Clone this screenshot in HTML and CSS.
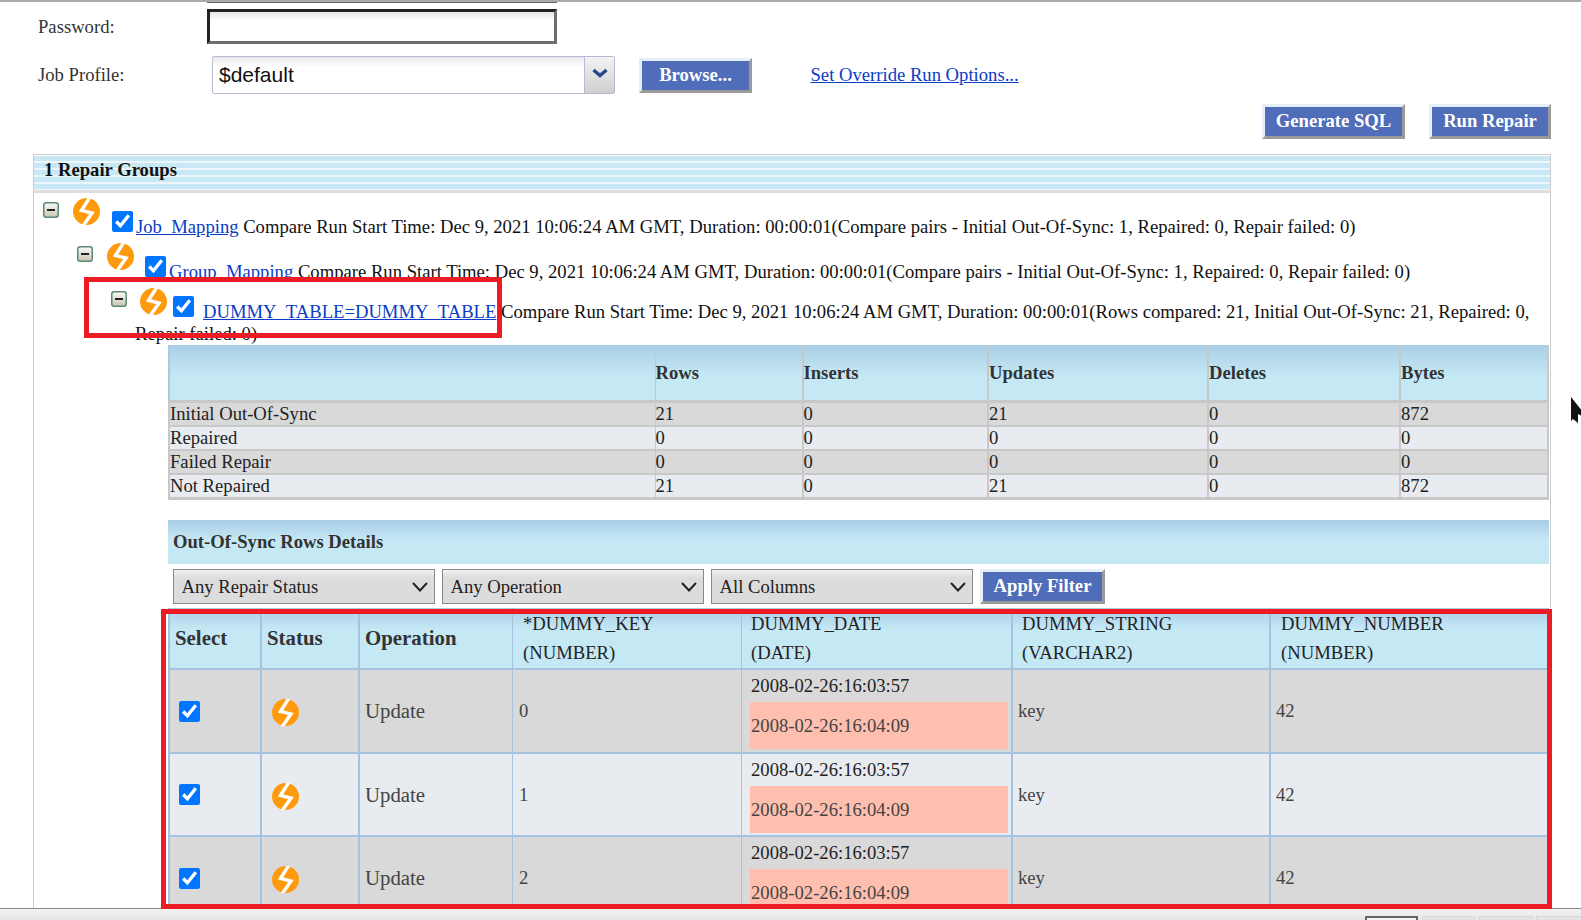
FILE: index.html
```html
<!DOCTYPE html>
<html lang="en">
<head>
<meta charset="utf-8">
<title>Repair Groups</title>
<link rel="stylesheet" href="styles.css">
</head>
<body>
<svg class="sprite" aria-hidden="true">
  <symbol id="status" viewBox="0 0 27 27">
    <circle cx="13.5" cy="13.5" r="13.5" fill="#ff9a0d"/>
    <path d="M17 -1 L8.5 12.5 L19 15 L10 28" fill="none" stroke="#fff" stroke-width="3.4"/>
  </symbol>
  <symbol id="minus" viewBox="0 0 16 16">
    <rect x=".75" y=".75" width="14.5" height="14.5" rx="2.5" fill="url(#minusfill)" stroke="#5d8a72" stroke-width="1.5"/>
    <rect x="4" y="7" width="8" height="2" fill="#222"/>
  </symbol>
  <linearGradient id="minusfill" x1="0" y1="0" x2="0" y2="1">
    <stop offset="0" stop-color="#fbfbf7"/><stop offset="1" stop-color="#c9c4b4"/>
  </linearGradient>
</svg>
<div class="page">
  <main class="content">
    <div class="prev-edge"></div>
    <div class="form-row password-row">
      <label class="form-label">Password:</label>
      <input class="password" type="password">
    </div>
    <div class="form-row profile-row">
      <label class="form-label">Job Profile:</label>
      <div class="combo">
        <span class="combo-value">$default</span>
        <span class="combo-button"><svg width="18" height="12" viewBox="0 0 18 12"><path d="M2.5 3 L9 8.5 L15.5 3" fill="none" stroke="#27478c" stroke-width="3.4"/></svg></span>
      </div>
      <button class="btn btn-browse">Browse...</button>
      <a class="override-link" href="#">Set Override Run Options...</a>
    </div>
    <div class="actions">
      <button class="btn btn-generate">Generate SQL</button>
      <button class="btn btn-run">Run Repair</button>
    </div>
    <section class="panel">
      <h2 class="panel-title">1 Repair Groups</h2>
      <div class="tree">
        <div class="node node-l1"><svg class="i-minus"><use href="#minus"/></svg><svg class="i-status"><use href="#status"/></svg><input class="check" type="checkbox" checked><a href="#">Job_Mapping</a> Compare Run Start Time: Dec 9, 2021 10:06:24 AM GMT, Duration: 00:00:01(Compare pairs - Initial Out-Of-Sync: 1, Repaired: 0, Repair failed: 0)</div>
        <div class="node node-l2"><svg class="i-minus"><use href="#minus"/></svg><svg class="i-status"><use href="#status"/></svg><input class="check" type="checkbox" checked><a href="#">Group_Mapping</a> Compare Run Start Time: Dec 9, 2021 10:06:24 AM GMT, Duration: 00:00:01(Compare pairs - Initial Out-Of-Sync: 1, Repaired: 0, Repair failed: 0)</div>
        <div class="node node-l3"><svg class="i-minus"><use href="#minus"/></svg><svg class="i-status"><use href="#status"/></svg><input class="check" type="checkbox" checked><a href="#">DUMMY_TABLE=DUMMY_TABLE</a> Compare Run Start Time: Dec 9, 2021 10:06:24 AM GMT, Duration: 00:00:01(Rows compared: 21, Initial Out-Of-Sync: 21, Repaired: 0, Repair failed: 0)</div>
      </div>
      <div class="detail">
        <table class="summary">
          <colgroup><col class="s1"><col class="s2"><col class="s3"><col class="s4"><col class="s5"><col class="s6"></colgroup>
          <thead><tr><th></th><th>Rows</th><th>Inserts</th><th>Updates</th><th>Deletes</th><th>Bytes</th></tr></thead>
          <tbody>
            <tr class="odd"><td>Initial Out-Of-Sync</td><td>21</td><td>0</td><td>21</td><td>0</td><td>872</td></tr>
            <tr class="even"><td>Repaired</td><td>0</td><td>0</td><td>0</td><td>0</td><td>0</td></tr>
            <tr class="odd"><td>Failed Repair</td><td>0</td><td>0</td><td>0</td><td>0</td><td>0</td></tr>
            <tr class="even"><td>Not Repaired</td><td>21</td><td>0</td><td>21</td><td>0</td><td>872</td></tr>
          </tbody>
        </table>
        <h3 class="details-title">Out-Of-Sync Rows Details</h3>
        <div class="filters">
          <select class="filter"><option>Any Repair Status</option></select>
          <select class="filter"><option>Any Operation</option></select>
          <select class="filter"><option>All Columns</option></select>
          <button class="btn btn-apply">Apply Filter</button>
        </div>
        <table class="rows">
          <colgroup><col class="r1"><col class="r2"><col class="r3"><col class="r4"><col class="r5"><col class="r6"><col class="r7"></colgroup>
          <thead>
            <tr>
              <th class="head-strong">Select</th><th class="head-strong">Status</th><th class="head-strong">Operation</th>
              <th class="thin pad-key">*DUMMY_KEY<br>(NUMBER)</th><th class="pad-date">DUMMY_DATE<br>(DATE)</th><th class="pad-date">DUMMY_STRING<br>(VARCHAR2)</th><th class="pad-num">DUMMY_NUMBER<br>(NUMBER)</th>
            </tr>
          </thead>
          <tbody>
            <tr class="odd">
              <td class="cell-icon"><input class="check" type="checkbox" checked></td><td class="cell-icon"><svg class="i-status"><use href="#status"/></svg></td><td class="cell-op">Update</td><td class="thin">0</td>
              <td class="cell-date"><div class="date-new">2008-02-26:16:03:57</div><div class="date-old">2008-02-26:16:04:09</div></td><td>key</td><td>42</td>
            </tr>
            <tr class="even">
              <td class="cell-icon"><input class="check" type="checkbox" checked></td><td class="cell-icon"><svg class="i-status"><use href="#status"/></svg></td><td class="cell-op">Update</td><td class="thin">1</td>
              <td class="cell-date"><div class="date-new">2008-02-26:16:03:57</div><div class="date-old">2008-02-26:16:04:09</div></td><td>key</td><td>42</td>
            </tr>
            <tr class="odd">
              <td class="cell-icon"><input class="check" type="checkbox" checked></td><td class="cell-icon"><svg class="i-status"><use href="#status"/></svg></td><td class="cell-op">Update</td><td class="thin">2</td>
              <td class="cell-date"><div class="date-new">2008-02-26:16:03:57</div><div class="date-old">2008-02-26:16:04:09</div></td><td>key</td><td>42</td>
            </tr>
          </tbody>
        </table>
      </div>
    </section>
  </main>
  <footer class="footer">
    <span class="tab tab-active"></span><span class="tab"></span><span class="tab"></span><span class="tab"></span>
  </footer>
  <div class="callout callout-node"></div>
  <div class="callout callout-rows"></div>
  <svg class="cursor" viewBox="0 0 14 26"><path d="M1 0 L13 15 L12 19 L8 17 L8 26 L3 22 L1 24 Z" fill="#111"/></svg>
</div>
</body>
</html>
```

FILE: styles.css
```css
* { box-sizing: border-box; }
html, body { margin: 0; height: 100%; }
body {
  font-family: "Liberation Serif", "Times New Roman", serif;
  font-size: 18.65px;
  line-height: 22px;
  color: #111;
  background: #fff;
  overflow: hidden;
}
a { color: #0a3cc4; }
.sprite { width: 0; height: 0; display: block; }

.page {
  position: relative;
  height: 920px;
  display: flex;
  flex-direction: column;
  overflow: hidden;
}
.content {
  flex: 1;
  min-height: 0;
  display: flex;
  flex-direction: column;
  border-top: 2px solid #aaa;
}
.prev-edge { width: 350px; height: 1px; margin-left: 207px; background: #666; flex: none; }

.form-row { display: flex; align-items: center; padding-left: 38px; flex: none; }
.form-label { width: 169px; color: #333; }
.password-row { margin-top: 6px; }
.password {
  width: 350px;
  height: 35px;
  border: 3px solid;
  border-color: #222 #6e6e6e #6e6e6e #222;
  background: linear-gradient(#e6e6e6, #fff 9px);
  outline: none;
  padding: 0;
}
.profile-row { margin-top: 12px; }
.combo {
  width: 403px;
  height: 38px;
  margin-left: 5px;
  display: flex;
  border: 1px solid #b7bad2;
  border-radius: 2px;
  background: linear-gradient(#e8e8ec, #fff 10px);
  font-family: "Liberation Sans", Arial, sans-serif;
  font-size: 21px;
  color: #111;
}
.combo-value { flex: 1; padding-left: 6px; line-height: 36px; }
.combo-button {
  width: 30px;
  display: flex;
  align-items: center;
  justify-content: center;
  padding-bottom: 5px;
  border-left: 1px solid #b7bad2;
  background: linear-gradient(#f3f3f3, #cfcfcf);
}
.btn {
  height: 35px;
  padding: 0;
  border: 3px solid;
  border-color: #e6eefa #9a9a9a #9a9a9a #e6eefa;
  background: #4f6db8;
  color: #fff;
  font: bold 18.65px "Liberation Serif", "Times New Roman", serif;
}
.btn-browse { width: 113px; margin-left: 24px; }
.override-link { margin-left: 58.5px; }
.actions { display: flex; justify-content: flex-end; gap: 24px; padding-right: 30px; margin-top: 10px; flex: none; }
.btn-generate { width: 143px; padding-bottom: 2px; }
.btn-run { width: 122px; padding-bottom: 2px; }

.panel {
  flex: 1;
  min-height: 0;
  margin: 15px 30px 0 33px;
  border: 1px solid #ccc;
  border-bottom: 0;
  overflow: hidden;
}
.panel-title {
  margin: 1px 0 0;
  height: 37px;
  padding: 3px 0 0 10px;
  font-size: 18.65px;
  line-height: 22px;
  border-bottom: 3px solid #e1dcdf;
  background: repeating-linear-gradient(#c8e8f5 0, #c8e8f5 5.5px, #edf7fb 5.5px, #edf7fb 7px);
}
.tree { padding-top: 5px; }
.node { margin-bottom: 5px; }
.node-l1 { padding-left: 9px; }
.node-l2 { padding-left: 43px; }
.node-l3 { padding-left: 101px; text-indent: -24px; margin-bottom: 0; }
.i-minus { width: 16px; height: 16px; margin-right: 14px; }
.node-l1 .i-minus { vertical-align: 15px; }
.node-l2 .i-minus { vertical-align: 16px; }
.node-l3 .i-minus { vertical-align: 11px; margin-right: 13px; }
.i-status { width: 27px; height: 27px; }
.node-l1 .i-status, .node-l2 .i-status { vertical-align: 8px; margin-right: 12px; }
.node-l2 .i-status { margin-right: 11px; }
.node-l3 .i-status { vertical-align: 3px; margin-right: 6px; }
.check { width: 21px; height: 21px; margin: 0; vertical-align: 1px; }
.node .check { margin-right: 3px; }
.node-l3 .check { margin-right: 9px; }

.detail { margin-left: 134px; width: 1381px; }
table { border-collapse: separate; border-spacing: 0; table-layout: fixed; width: 1381px; }
.odd { background: #d9d9d9; }
.even { background: #e8ecf1; }

.summary { color: #222; }
.s1 { width: 487.5px; } .s2 { width: 148px; } .s3 { width: 185.5px; }
.s4 { width: 220px; } .s5 { width: 192px; } .s6 { width: 148px; }
.summary th {
  height: 58px;
  padding: 0;
  text-align: left;
  color: #333;
  background: linear-gradient(#a9cde6, #c5e8f5 55%);
  border-right: 2px solid #c8c8c8;
  border-bottom: 3px solid #c8c8c8;
}
.summary th:first-child { border-left: 2px solid #a9c8e4; border-right-width: 1px; }
.summary td {
  height: 24px;
  padding: 0;
  border-right: 2px solid #c8c8c8;
  border-bottom: 2px solid #c8c8c8;
}
.summary td:first-child { border-left: 2px solid #c8c8c8; border-right-width: 1px; }
.summary tr:last-child td { height: 23px; border-bottom-width: 3px; }

.details-title {
  margin: 20px 0 0;
  height: 44px;
  padding-left: 5px;
  font-size: 18.65px;
  line-height: 44px;
  color: #333;
  background: linear-gradient(#a9cde6, #c5e8f5 45%);
}
.filters { display: flex; gap: 7px; padding: 5px 0 0 5px; }
.filter {
  appearance: none;
  width: 262px;
  height: 35px;
  padding-left: 7.5px;
  border: 1px solid #888;
  border-radius: 0;
  background:
    url("data:image/svg+xml,%3Csvg xmlns='http://www.w3.org/2000/svg' width='16' height='10' viewBox='0 0 16 10'%3E%3Cpath d='M1 1 L8 8.5 L15 1' fill='none' stroke='%23222' stroke-width='2'/%3E%3C/svg%3E") no-repeat right 6px center,
    linear-gradient(#f2f2f2, #dcdcdc 8px);
  color: #222;
  font: 18.65px "Liberation Serif", "Times New Roman", serif;
}
.btn-apply { width: 125px; padding-bottom: 2px; }

.rows { margin-top: 4px; color: #444; }
.r1 { width: 94px; } .r2 { width: 98px; } .r3 { width: 153px; } .r4 { width: 229px; }
.r5 { width: 271px; } .r6 { width: 258px; } .r7 { width: 278px; }
.rows th {
  height: 62px;
  padding: 1px 0 0 9px;
  vertical-align: top;
  text-align: left;
  font-weight: normal;
  line-height: 29px;
  color: #222;
  background: linear-gradient(#a9cde6, #c5e8f5 35%);
  border-right: 2px solid #a3c3e0;
  border-bottom: 2px solid #a3c3e0;
}
.rows th:first-child, .rows td:first-child { border-left: 2px solid #a3c3e0; }
.rows th.head-strong { font-size: 20.85px; font-weight: bold; vertical-align: middle; padding: 1px 0 0 5px; color: #333; }
.rows th.pad-key { padding-left: 10px; }
.rows th.pad-num { padding-left: 10px; }
.rows td {
  height: 83.5px;
  padding: 1px 0 0 5px;
  border-right: 2px solid #a3c3e0;
  border-bottom: 2px solid #a3c3e0;
}
.rows .thin { border-right-width: 1px; padding-left: 6px; }
.rows .cell-icon { padding-left: 9px; }
.rows .cell-icon .i-status { margin: 3px 0 0 1px; }
.rows .cell-op { padding-left: 5px; font-size: 20.8px; border-right-width: 1px; }
.rows th:nth-child(3) { border-right-width: 1px; }
.rows .cell-date { padding: 1px 3px 0 8px; vertical-align: top; border-right-width: 2px; }
.cell-icon .i-status, .cell-icon .check { display: block; }
.date-new { height: 30px; padding-left: 1px; line-height: 30px; color: #222; }
.date-old { height: 47px; margin-top: 1px; padding-left: 1px; line-height: 47px; background: #ffbfae; color: #444; }

.footer {
  flex: none;
  height: 12px;
  padding: 7px 0 0 1365px;
  display: flex;
  gap: 4px;
  border-top: 1px solid #888;
  background: linear-gradient(#f2f2f2, #e6e6e6);
  overflow: hidden;
}
.tab { width: 53px; height: 16px; flex: none; border: 1px solid #d8d8d8; background: #e4e4e4; }
.tab-active { border: 2px solid #666; background: #f4f4f4; }

.callout { position: absolute; border: 5px solid #ed1c24; }
.callout-node { left: 84px; top: 277px; width: 418px; height: 61px; }
.callout-rows { left: 161px; top: 609px; width: 1391px; height: 300px; }
.cursor { position: absolute; left: 1570px; top: 397px; width: 14px; height: 26px; }
```
